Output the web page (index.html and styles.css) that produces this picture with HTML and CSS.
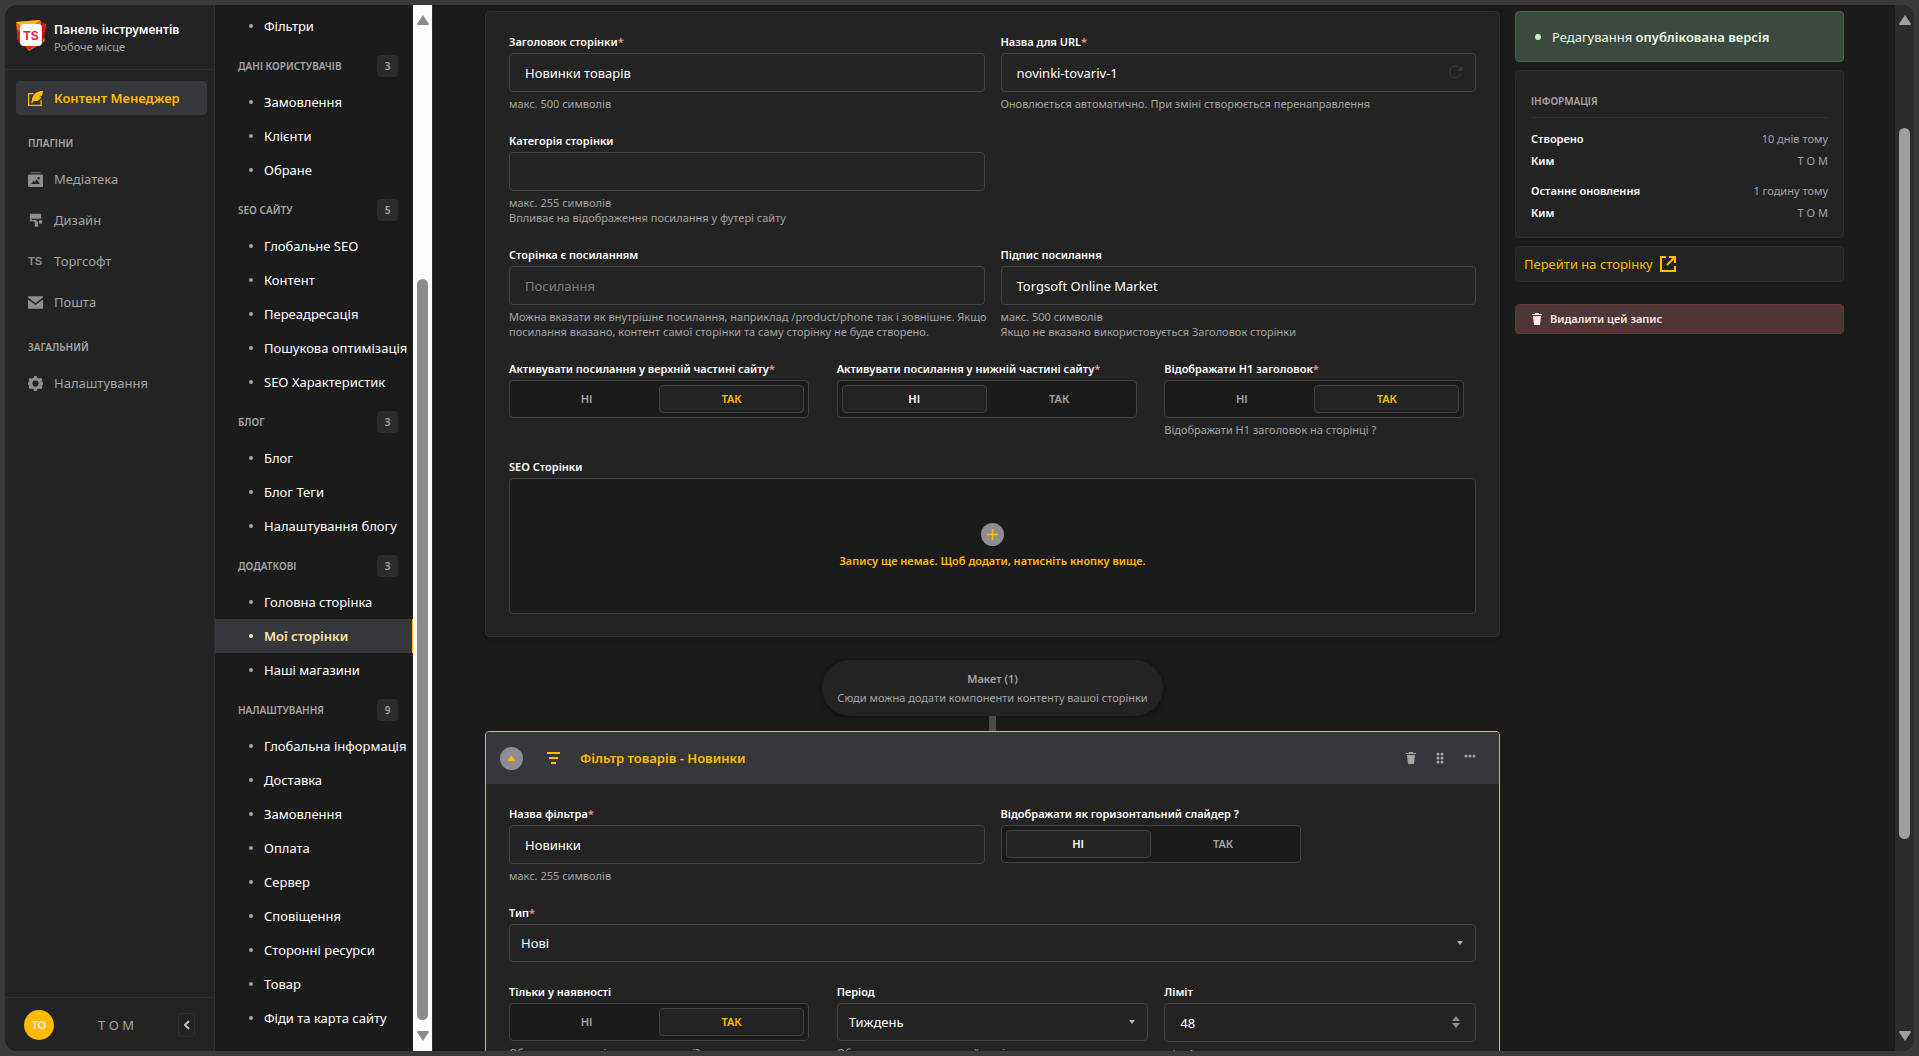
FILE: index.html
```html
<!DOCTYPE html>
<html lang="uk">
  <head>
    <meta charset="UTF-8" />
    <meta name="viewport" content="width=device-width, initial-scale=1.0" />
    <title>Контент Менеджер - Новинки товарів</title>
    <link rel="stylesheet" href="styles.css">
  </head>
  <body>
    <div class="app">
      <nav class="sidebar" aria-label="Головне меню">
        <div class="brand">
          <svg class="brand-logo" viewBox="0 0 30 31" aria-hidden="true">
            <path d="M0 2L24 0l2 4 4 0-2 12 1 5-8 5-8 5-5-6-5-3-2-9z" fill="#f26a0c" />
            <path d="M0 2L24 0l-6 5H4z" fill="#fdb913" />
            <path d="M25 2l4 1-1 15-3 6z" fill="#c4160a" />
            <path d="M1 10l3 1v12l-3-4z" fill="#d8200c" />
            <path d="M9 26h10l-6 4z" fill="#e02a10" />
            <rect x="4" y="4" width="22" height="22" rx="4" fill="#fff" />
            <text x="15" y="20" text-anchor="middle" class="brand-mark">TS</text>
          </svg>
          <div>
            <p class="brand-title">Панель інструментів</p>
            <p class="brand-sub">Робоче місце</p>
          </div>
        </div>

        <div class="menu">
          <a href="#" class="menu-link active">
            <svg class="icon" viewBox="0 0 24 24" fill="currentColor" aria-hidden="true">
              <path d="M24 0C15 0 7 4 6 16l-1 4 2-1 2-3c8 1 11-3 12-6l-3-1 4-1c1-3 2-6 2-8z" />
              <path d="M9 4H1v19h20v-9" fill="none" stroke="currentColor" stroke-width="2" />
            </svg>
            Контент Менеджер
          </a>

          <h2 class="menu-heading">Плагіни</h2>
          <a href="#" class="menu-link">
            <svg class="icon" viewBox="0 0 24 24" fill="currentColor" aria-hidden="true">
              <path d="M4 0h16v2H4z" opacity="0.7" />
              <path fill-rule="evenodd" d="M2 4h20a2 2 0 0 1 2 2v16a2 2 0 0 1-2 2H2a2 2 0 0 1-2-2V6a2 2 0 0 1 2-2zm3 15h14l-5-7-3 4-2-2zM17 8a2 2 0 1 0 0 4 2 2 0 0 0 0-4z" />
            </svg>
            Медіатека
          </a>
          <a href="#" class="menu-link">
            <svg class="icon" viewBox="0 0 24 24" fill="currentColor" aria-hidden="true">
              <path d="M3 1h18v8H3z" />
              <path d="M3 9h3v2h8v3h2v8h-5v-8H9v-1H3z" />
              <circle cx="20" cy="14" r="3" />
            </svg>
            Дизайн
          </a>
          <a href="#" class="menu-link">
            <span class="icon icon-text" aria-hidden="true">TS</span>
            Торгсофт
          </a>
          <a href="#" class="menu-link">
            <svg class="icon" viewBox="0 0 24 24" fill="currentColor" aria-hidden="true">
              <path d="M0 2h24v2L12 13 0 4z" />
              <path d="M0 7l12 9 12-9v15H0z" />
            </svg>
            Пошта
          </a>

          <h2 class="menu-heading">Загальний</h2>
          <a href="#" class="menu-link">
            <svg class="icon" viewBox="0 0 24 24" fill="currentColor" aria-hidden="true">
              <path fill-rule="evenodd" d="M10 0h4l1 3 3 1 3-1 2 3-1 3 2 1v4l-2 1 1 3-2 3-3-1-3 1-1 3h-4l-1-3-3-1-3 1-2-3 1-3-2-1v-4l2-1-1-3 2-3 3 1 3-1zm2 7a5 5 0 1 0 0 10 5 5 0 0 0 0-10z" />
            </svg>
            Налаштування
          </a>
        </div>

        <div class="user">
          <span class="avatar">TO</span>
          <span class="user-name">T O M</span>
          <button type="button" class="collapse-btn" aria-label="Згорнути меню">
            <svg viewBox="0 0 6 10" width="6" height="10" aria-hidden="true">
              <path d="M5 1L1 5l4 4" fill="none" stroke="currentColor" stroke-width="2" />
            </svg>
          </button>
        </div>
      </nav>

      <nav class="subnav" aria-label="Типи контенту">
        <ul class="subnav-list">
          <li><a href="#">Фільтри</a></li>
        </ul>

        <div class="subnav-heading"><h3>Дані користувачів</h3><span class="count">3</span></div>
        <ul class="subnav-list">
          <li><a href="#">Замовлення</a></li>
          <li><a href="#">Клієнти</a></li>
          <li><a href="#">Обране</a></li>
        </ul>

        <div class="subnav-heading"><h3>SEO сайту</h3><span class="count">5</span></div>
        <ul class="subnav-list">
          <li><a href="#">Глобальне SEO</a></li>
          <li><a href="#">Контент</a></li>
          <li><a href="#">Переадресація</a></li>
          <li><a href="#">Пошукова оптимізація</a></li>
          <li><a href="#">SEO Характеристик</a></li>
        </ul>

        <div class="subnav-heading"><h3>Блог</h3><span class="count">3</span></div>
        <ul class="subnav-list">
          <li><a href="#">Блог</a></li>
          <li><a href="#">Блог Теги</a></li>
          <li><a href="#">Налаштування блогу</a></li>
        </ul>

        <div class="subnav-heading"><h3>Додаткові</h3><span class="count">3</span></div>
        <ul class="subnav-list">
          <li><a href="#">Головна сторінка</a></li>
          <li><a href="#" class="active" aria-current="page">Мої сторінки</a></li>
          <li><a href="#">Наші магазини</a></li>
        </ul>

        <div class="subnav-heading"><h3>Налаштування</h3><span class="count">9</span></div>
        <ul class="subnav-list">
          <li><a href="#">Глобальна інформація</a></li>
          <li><a href="#">Доставка</a></li>
          <li><a href="#">Замовлення</a></li>
          <li><a href="#">Оплата</a></li>
          <li><a href="#">Сервер</a></li>
          <li><a href="#">Сповіщення</a></li>
          <li><a href="#">Сторонні ресурси</a></li>
          <li><a href="#">Товар</a></li>
          <li><a href="#">Фіди та карта сайту</a></li>
        </ul>
      </nav>

      <div class="scrollbar scrollbar-light" aria-hidden="true">
        <svg viewBox="0 0 12 10"><path d="M6 0l6 9q0 1-1 1H1q-1 0-1-1z" /></svg>
        <div class="track"><div class="thumb"></div></div>
        <svg viewBox="0 0 12 10"><path d="M6 10l6-9q0-1-1-1H1Q0 0 0 1z" /></svg>
      </div>

      <main class="content">
        <form class="editor">
          <section class="panel">
            <div class="row">
              <div class="field span-6">
                <label for="title">Заголовок сторінки<span class="req">*</span></label>
                <input type="text" id="title" value="Новинки товарів" />
                <p class="hint">макс. 500 символів</p>
              </div>
              <div class="field span-6">
                <label for="slug">Назва для URL<span class="req">*</span></label>
                <div class="input-box">
                  <input type="text" id="slug" value="novinki-tovariv-1" />
                  <button type="button" class="refresh-btn" aria-label="Оновити">
                    <svg viewBox="0 0 14 14" width="14" height="14" aria-hidden="true">
                      <path d="M12 9A6 6 0 1 1 11 3" fill="none" stroke="currentColor" stroke-width="1" />
                      <path d="M13 1v5H8z" fill="currentColor" />
                    </svg>
                  </button>
                </div>
                <p class="hint">Оновлюється автоматично. При зміні створюється перенаправлення</p>
              </div>
            </div>

            <div class="row">
              <div class="field span-6">
                <label for="category">Категорія сторінки</label>
                <input type="text" id="category" />
                <p class="hint">макс. 255 символів<br />Впливає на відображення посилання у футері сайту</p>
              </div>
            </div>

            <div class="row">
              <div class="field span-6">
                <label for="link">Сторінка є посиланням</label>
                <input type="text" id="link" placeholder="Посилання" />
                <p class="hint hint-lines">Можна вказати як внутрішнє посилання, наприклад /product/phone так і зовнішнє. Якщо<br />посилання вказано, контент самої сторінки та саму сторінку не буде створено.</p>
              </div>
              <div class="field span-6">
                <label for="caption">Підпис посилання</label>
                <input type="text" id="caption" value="Torgsoft Online Market" />
                <p class="hint">макс. 500 символів<br />Якщо не вказано використовується Заголовок сторінки</p>
              </div>
            </div>

            <div class="row">
              <div class="field span-4" role="group" aria-labelledby="top-label">
                <span class="label" id="top-label">Активувати посилання у верхній частині сайту<span class="req">*</span></span>
                <div class="toggle">
                  <label><input type="radio" name="top" /><span>НІ</span></label>
                  <label><input type="radio" name="top" checked /><span class="yes">ТАК</span></label>
                </div>
              </div>
              <div class="field span-4" role="group" aria-labelledby="bottom-label">
                <span class="label" id="bottom-label">Активувати посилання у нижній частині сайту<span class="req">*</span></span>
                <div class="toggle">
                  <label><input type="radio" name="bottom" checked /><span>НІ</span></label>
                  <label><input type="radio" name="bottom" /><span class="yes">ТАК</span></label>
                </div>
              </div>
              <div class="field span-4" role="group" aria-labelledby="h1-label">
                <span class="label" id="h1-label">Відображати H1 заголовок<span class="req">*</span></span>
                <div class="toggle">
                  <label><input type="radio" name="h1" /><span>НІ</span></label>
                  <label><input type="radio" name="h1" checked /><span class="yes">ТАК</span></label>
                </div>
                <p class="hint">Відображати H1 заголовок на сторінці ?</p>
              </div>
            </div>

            <div class="field">
              <span class="label">SEO Сторінки</span>
              <div class="empty-box">
                <button type="button" class="round-btn" aria-label="Додати запис">
                  <svg viewBox="0 0 11 11" width="11" height="11" aria-hidden="true">
                    <path d="M5.5 0v11M0 5.5h11" stroke="currentColor" stroke-width="1.6" />
                  </svg>
                </button>
                <p>Запису ще немає. Щоб додати, натисніть кнопку вище.</p>
              </div>
            </div>
          </section>

          <div class="zone">
            <div class="zone-label">
              <p class="zone-title">Макет (1)</p>
              <p>Сюди можна додати компоненти контенту вашої сторінки</p>
            </div>
            <div class="zone-line"></div>
          </div>

          <section class="component">
            <header class="component-head">
              <button type="button" class="round-btn" aria-label="Згорнути компонент">
                <svg viewBox="0 0 7 5" width="7" height="5" aria-hidden="true">
                  <path d="M3 0h1l3 4v1H0V4z" fill="currentColor" />
                </svg>
              </button>
              <svg class="filter-icon" viewBox="0 0 13 12" width="13" height="12" fill="currentColor" aria-hidden="true">
                <path d="M0 0h13v2H0zM2 5h9v2H2zM4 10h5v2H4z" />
              </svg>
              <h2>Фільтр товарів - Новинки</h2>
              <div class="component-actions">
                <button type="button" aria-label="Видалити">
                  <svg viewBox="0 0 10 12" width="10" height="12" fill="currentColor" aria-hidden="true">
                    <path d="M3 0h4v1h3v1H0V1h3zM1 3h8l-1 9H2z" />
                  </svg>
                </button>
                <button type="button" aria-label="Перетягнути">
                  <svg viewBox="0 0 8 12" width="8" height="12" fill="currentColor" aria-hidden="true">
                    <circle cx="2" cy="2" r="1.5" /><circle cx="6" cy="2" r="1.5" />
                    <circle cx="2" cy="6" r="1.5" /><circle cx="6" cy="6" r="1.5" />
                    <circle cx="2" cy="10" r="1.5" /><circle cx="6" cy="10" r="1.5" />
                  </svg>
                </button>
                <button type="button" aria-label="Більше дій">
                  <svg viewBox="0 0 12 12" width="12" height="12" fill="currentColor" aria-hidden="true">
                    <circle cx="2" cy="4" r="1.5" /><circle cx="6" cy="4" r="1.5" /><circle cx="10" cy="4" r="1.5" />
                  </svg>
                </button>
              </div>
            </header>

            <div class="component-body">
              <div class="row">
                <div class="field span-6">
                  <label for="filter-name">Назва фільтра<span class="req">*</span></label>
                  <input type="text" id="filter-name" value="Новинки" />
                  <p class="hint">макс. 255 символів</p>
                </div>
                <div class="field span-6" role="group" aria-labelledby="slider-label">
                  <span class="label" id="slider-label">Відображати як горизонтальний слайдер ?</span>
                  <div class="toggle">
                    <label><input type="radio" name="slider" checked /><span>НІ</span></label>
                    <label><input type="radio" name="slider" /><span class="yes">ТАК</span></label>
                  </div>
                </div>
              </div>

              <div class="field">
                <label for="type">Тип<span class="req">*</span></label>
                <select id="type">
                  <option selected>Нові</option>
                </select>
              </div>

              <div class="row">
                <div class="field span-4" role="group" aria-labelledby="stock-label">
                  <span class="label" id="stock-label">Тільки у наявності</span>
                  <div class="toggle">
                    <label><input type="radio" name="stock" /><span>НІ</span></label>
                    <label><input type="radio" name="stock" checked /><span class="yes">ТАК</span></label>
                  </div>
                  <p class="hint">Обирати товари тільки у наявності?</p>
                </div>
                <div class="field span-4">
                  <label for="period">Період</label>
                  <select id="period">
                    <option selected>Тиждень</option>
                  </select>
                  <p class="hint">Обирати товари за певний період</p>
                </div>
                <div class="field span-4">
                  <label for="limit">Ліміт</label>
                  <div class="input-box">
                    <input type="number" id="limit" value="48" min="1" />
                    <svg class="stepper" viewBox="0 0 8 12" width="8" height="12" fill="currentColor" aria-hidden="true">
                      <path d="M4 0l4 5H0zM4 12l4-5H0z" />
                    </svg>
                  </div>
                  <p class="hint">мін. 1</p>
                </div>
              </div>
            </div>
          </section>
        </form>

        <aside class="side">
          <div class="status"><span class="status-dot"></span><p>Редагування <strong>опублікована версія</strong></p></div>

          <section class="info">
            <h2>Інформація</h2>
            <dl>
              <div><dt>Створено</dt><dd>10 днів тому</dd></div>
              <div><dt>Ким</dt><dd>T O M</dd></div>
            </dl>
            <dl>
              <div><dt>Останнє оновлення</dt><dd>1 годину тому</dd></div>
              <div><dt>Ким</dt><dd>T O M</dd></div>
            </dl>
          </section>

          <a href="#" class="page-link">
            Перейти на сторінку
            <svg viewBox="0 0 16 16" width="16" height="16" fill="none" stroke="currentColor" stroke-width="2" aria-hidden="true">
              <path d="M6 1H1v14h14v-5M9 1h6v6M15 1L7 9" />
            </svg>
          </a>

          <button type="button" class="delete-btn">
            <svg viewBox="0 0 10 12" width="10" height="12" fill="currentColor" aria-hidden="true">
              <path d="M3 0h4v1h3v1H0V1h3zM1 3h8l-1 9H2z" />
            </svg>
            Видалити цей запис
          </button>
        </aside>
      </main>

      <div class="scrollbar scrollbar-dark" aria-hidden="true">
        <svg viewBox="0 0 12 10"><path d="M6 0l6 9q0 1-1 1H1q-1 0-1-1z" /></svg>
        <div class="track"><div class="thumb"></div></div>
        <svg viewBox="0 0 12 10"><path d="M6 10l6-9q0-1-1-1H1Q0 0 0 1z" /></svg>
      </div>
    </div>
  </body>
</html>
```
FILE: styles.css
```css
* {
  margin: 0;
  padding: 0;
  box-sizing: border-box;
}

body {
  background-color: #3a3a3a;
  color: #fff;
  padding: 5px;
  font-family: "Segoe UI", "Noto Sans", "Open Sans", sans-serif;
  font-size: 13px;
  line-height: 20px;
}

ul {
  list-style: none;
}

a {
  color: inherit;
  text-decoration: none;
}

button,
input,
select {
  font: inherit;
  color: inherit;
}

button {
  border: none;
  background: none;
  cursor: pointer;
}

.app {
  display: flex;
  height: calc(100vh - 10px);
  border-radius: 12px;
  overflow: hidden;
  background-color: #1b1b1b;
}

/* main menu */

.sidebar {
  display: flex;
  flex-direction: column;
  flex: none;
  width: 210px;
  background-color: #232323;
  border-right: 1px solid #303030;
}

.brand {
  display: flex;
  gap: 8px;
  height: 65px;
  padding: 15px 11px;
  border-bottom: 1px solid #303030;
}

.brand-logo {
  width: 30px;
  height: 31px;
}

.brand-mark {
  font: bold 12px "Liberation Sans", sans-serif;
  fill: #e3202a;
}

.brand-title {
  font-size: 12px;
  font-weight: 600;
  line-height: 20px;
}

.brand-sub {
  font-size: 11px;
  line-height: 13px;
  color: #a5a5a5;
}

.menu {
  flex: 1;
  padding: 11px 7px 0 11px;
}

.menu-link {
  display: flex;
  align-items: center;
  gap: 11px;
  height: 34px;
  margin-bottom: 7px;
  padding: 0 12px;
  border-radius: 4px;
  color: #a5a5a5;
}

.menu-link.active {
  background-color: #36373b;
  color: #ffbb00;
  font-weight: 600;
}

.icon {
  flex: none;
  width: 15px;
  height: 15px;
  color: #8e8e92;
}

.menu-link.active .icon {
  color: inherit;
}

.icon-text {
  font: bold 11px/15px "Liberation Sans", sans-serif;
}

.menu-heading {
  margin: 19px 12px 10px;
  font-size: 10px;
  font-weight: 600;
  line-height: 18px;
  text-transform: uppercase;
  color: #a5a5a5;
}

.user {
  display: flex;
  align-items: center;
  justify-content: space-between;
  height: 54px;
  padding: 0 19px;
  border-top: 1px solid #303030;
}

.avatar {
  width: 30px;
  height: 30px;
  border-radius: 50%;
  background-color: #ffbb00;
  color: #eaeaea;
  font-size: 11px;
  font-weight: 600;
  line-height: 30px;
  text-align: center;
}

.user-name {
  color: #a5a5a5;
}

.collapse-btn {
  display: flex;
  align-items: center;
  justify-content: center;
  width: 17px;
  height: 24px;
  border: 1px solid #303030;
  border-radius: 4px;
  color: #c0c0c0;
}

/* content types */

.subnav {
  flex: none;
  width: 198px;
  padding-top: 4px;
}

.subnav-list a {
  display: flex;
  align-items: center;
  height: 34px;
  padding-left: 34px;
  white-space: nowrap;
}

.subnav-list a::before {
  content: "";
  width: 4px;
  height: 4px;
  margin-right: 11px;
  border-radius: 50%;
  background-color: #a5a5a5;
}

.subnav-list a.active {
  background-color: #36373b;
  border-right: 1px solid #ffbb00;
  color: #ffe3a0;
  font-weight: 600;
}

.subnav-list a.active::before {
  background-color: #ffe3a0;
}

.subnav-heading {
  display: flex;
  align-items: center;
  justify-content: space-between;
  margin: 12px 15px 8px 23px;
}

.subnav-heading h3 {
  font-size: 10px;
  font-weight: 600;
  text-transform: uppercase;
  color: #a5a5a5;
}

.count {
  width: 21px;
  border-radius: 4px;
  background-color: #2b2b2b;
  color: #a5a5a5;
  font-size: 10px;
  font-weight: 600;
  line-height: 22px;
  text-align: center;
}

/* scrollbars */

.scrollbar {
  display: flex;
  flex-direction: column;
  align-items: center;
  flex: none;
  width: 19px;
  padding: 10px 0;
}

.scrollbar svg {
  width: 12px;
  height: 10px;
}

.track {
  display: flex;
  flex-direction: column;
  flex: 1;
  width: 11px;
}

.track::before,
.track::after {
  content: "";
}

.thumb {
  border-radius: 6px;
}

.scrollbar-light {
  background-color: #fcfcfc;
}

.scrollbar-light svg {
  fill: #8b8b8b;
}

.scrollbar-light .thumb {
  flex: 740;
  background-color: #8b8b8b;
}

.scrollbar-light .track::before {
  flex: 254;
}

.scrollbar-light .track::after {
  flex: 11;
}

.scrollbar-dark {
  background-color: #2c2c2c;
}

.scrollbar-dark svg {
  fill: #9f9f9f;
}

.scrollbar-dark .thumb {
  flex: 710;
  background-color: #9f9f9f;
}

.scrollbar-dark .track::before {
  flex: 103;
}

.scrollbar-dark .track::after {
  flex: 192;
}

/* edit view */

.content {
  display: flex;
  align-items: flex-start;
  gap: 15px;
  flex: 1;
  min-width: 0;
  padding: 6px 51px 0 52px;
  border-left: 1px solid #303030;
  overflow: hidden;
}

.editor {
  flex: 1;
  min-width: 0;
}

.side {
  flex: none;
  width: 329px;
}

.panel {
  display: flex;
  flex-direction: column;
  gap: 22px;
  padding: 22px 23px;
  border: 1px solid #2d2d2d;
  border-radius: 4px;
  background-color: #232323;
  box-shadow: 0 1px 6px rgba(0, 0, 0, 0.3);
}

.row {
  display: grid;
  grid-template-columns: repeat(12, minmax(0, 1fr));
  column-gap: 16px;
}

.span-6 {
  grid-column: span 6;
}

.span-4 {
  grid-column: span 4;
}

.field > label,
.label {
  display: block;
  margin-bottom: 3px;
  font-size: 11px;
  font-weight: 600;
  line-height: 16px;
}

.req {
  color: #ee9a80;
}

input[type="text"],
input[type="number"],
select {
  display: block;
  width: 100%;
  height: 39px;
  padding: 0 15px;
  border: 1px solid #424242;
  border-radius: 4px;
  background-color: #232323;
  outline: none;
  appearance: none;
}

input:focus,
select:focus {
  border-color: #ffbb00;
}

input::placeholder {
  color: #808080;
}

input[type="number"] {
  appearance: textfield;
}

select {
  height: 38px;
  padding: 0 11px;
  background-image: url("data:image/svg+xml;charset=UTF-8,%3csvg xmlns='http://www.w3.org/2000/svg' viewBox='0 0 6 4' fill='%23b5b5b5'%3e%3cpath d='M0 0h6L3 4z'/%3e%3c/svg%3e");
  background-repeat: no-repeat;
  background-position: right 12px center;
  background-size: 6px;
}

.input-box {
  position: relative;
}

.refresh-btn {
  position: absolute;
  top: 12px;
  right: 13px;
  height: 14px;
  line-height: 0;
  color: #3a3a3a;
}

.stepper {
  position: absolute;
  top: 13px;
  right: 16px;
  color: #8e8e92;
}

.hint {
  margin-top: 4px;
  font-size: 11px;
  line-height: 15px;
  color: #a5a5a5;
}

.hint-lines {
  white-space: nowrap;
}

.toggle {
  display: flex;
  max-width: 300px;
  height: 38px;
  padding: 4px;
  border: 1px solid #424242;
  border-radius: 4px;
  background-color: #1b1b1b;
}

.toggle label {
  position: relative;
  flex: 1;
  cursor: pointer;
}

.toggle input {
  position: absolute;
  opacity: 0;
}

.toggle span {
  display: block;
  border: 1px solid transparent;
  border-radius: 4px;
  color: #a5a5a5;
  font-size: 11px;
  font-weight: 600;
  line-height: 26px;
  text-align: center;
}

.toggle input:checked + span {
  border-color: #424242;
  background-color: #232323;
  color: #fff;
}

.toggle input:checked + .yes {
  color: #ffbb00;
}

.empty-box {
  display: flex;
  flex-direction: column;
  align-items: center;
  justify-content: center;
  gap: 7px;
  height: 136px;
  border: 1px solid #424242;
  border-radius: 4px;
  background-color: #1b1b1b;
  color: #ffbb00;
  font-size: 11px;
  font-weight: 600;
  line-height: 16px;
}

.round-btn {
  display: flex;
  align-items: center;
  justify-content: center;
  width: 23px;
  height: 23px;
  border-radius: 50%;
  background-color: #8e8e92;
  color: #ffbb00;
}

/* dynamic zone */

.zone {
  display: flex;
  flex-direction: column;
  align-items: center;
  margin-top: 23px;
}

.zone-label {
  padding: 9px 15px;
  border-radius: 28px;
  background-color: #232323;
  box-shadow: 0 1px 6px rgba(0, 0, 0, 0.4);
  color: #a5a5a5;
  font-size: 11px;
  line-height: 19px;
  text-align: center;
}

.zone-title {
  font-weight: 600;
}

.zone-line {
  width: 7px;
  height: 15px;
  background-color: #4a4a4a;
}

.component {
  border: 1px solid #ffbb00;
  border-radius: 4px;
  overflow: hidden;
  background-color: #232323;
}

.component-head {
  display: flex;
  align-items: center;
  height: 52px;
  padding: 0 23px 0 14px;
  background-color: #36373b;
  color: #ffbb00;
}

.component-head h2 {
  font-size: 13px;
  font-weight: 600;
}

.filter-icon {
  margin: 0 20px 0 24px;
}

.component-actions {
  display: flex;
  gap: 20px;
  margin-left: auto;
  color: #a5a5a5;
}

.component-actions button {
  height: 12px;
  line-height: 0;
}

.component-body {
  display: flex;
  flex-direction: column;
  gap: 22px;
  padding: 22px 23px;
}

/* right column */

.status {
  display: flex;
  align-items: center;
  gap: 11px;
  height: 51px;
  padding: 0 19px;
  border: 1px solid #3f6b4a;
  border-radius: 4px;
  background-color: #3a4a40;
  color: #eafbe7;
}

.status strong {
  font-weight: 600;
}

.status-dot {
  width: 6px;
  height: 6px;
  border-radius: 50%;
  background-color: #c6f0c2;
}

.info {
  margin-top: 8px;
  padding: 22px 15px 13px;
  border: 1px solid #2d2d2d;
  border-radius: 4px;
  background-color: #232323;
  font-size: 11px;
  line-height: 22px;
}

.info h2 {
  padding-bottom: 8px;
  border-bottom: 1px solid #303030;
  font-size: 10px;
  font-weight: 600;
  line-height: 16px;
  text-transform: uppercase;
  color: #a5a5a5;
}

.info dl {
  margin-top: 8px;
}

.info h2 + dl {
  margin-top: 10px;
}

.info dl div {
  display: flex;
  justify-content: space-between;
}

.info dt {
  font-weight: 600;
}

.info dd {
  color: #a5a5a5;
}

.page-link {
  display: flex;
  align-items: center;
  gap: 7px;
  height: 36px;
  margin-top: 8px;
  padding: 0 8px;
  border: 1px solid #2d2d2d;
  border-radius: 4px;
  background-color: #232323;
  color: #ffbb00;
}

.delete-btn {
  display: flex;
  align-items: center;
  gap: 8px;
  width: 100%;
  height: 30px;
  margin-top: 22px;
  padding: 0 16px;
  border: 1px solid #6b3335;
  border-radius: 4px;
  background-color: #4d3635;
  color: #fbeaea;
  font-size: 11px;
  font-weight: 600;
}
```
